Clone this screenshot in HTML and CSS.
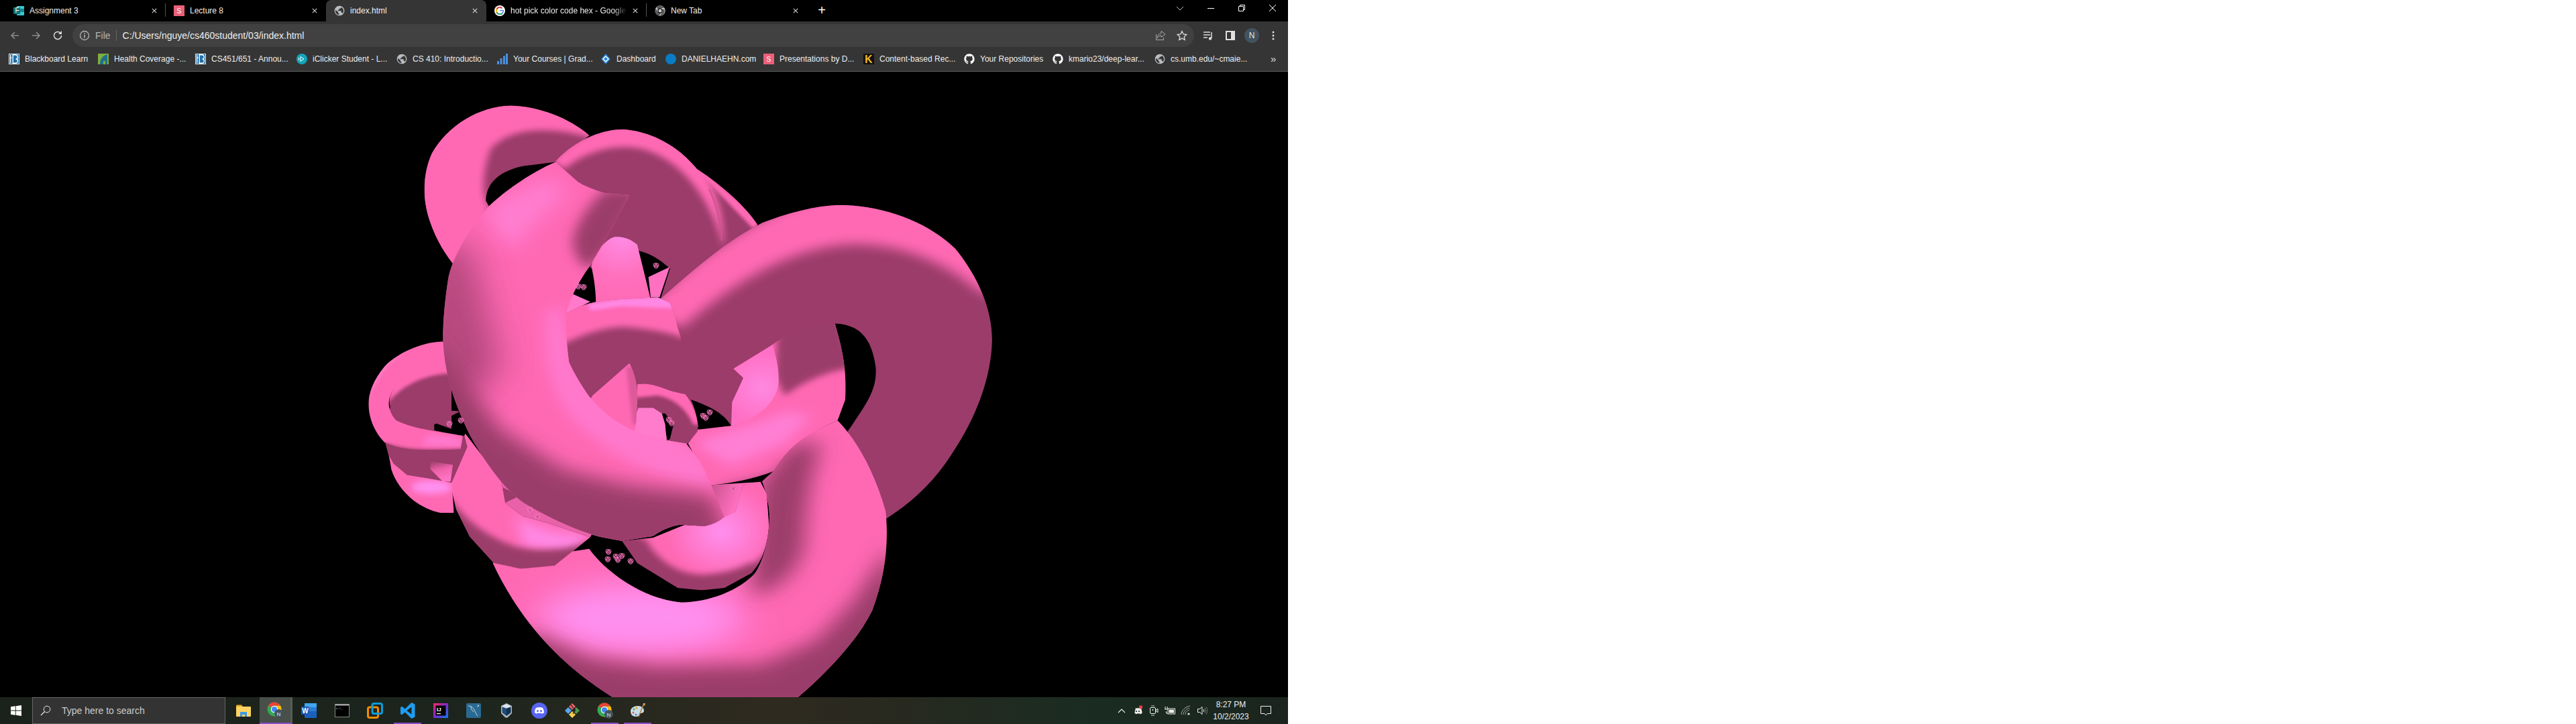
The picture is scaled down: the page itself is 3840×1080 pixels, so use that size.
FILE: index.html
```html
<!DOCTYPE html>
<html lang="en">
<head>
    <meta charset="UTF-8">
    <title>index.html</title>
    <link rel="stylesheet" href="styles.css">
</head>
<body>
    <svg class="defs" width="0" height="0">
        <defs>
            <filter id="b4" x="-30%" y="-30%" width="160%" height="160%"><feGaussianBlur stdDeviation="4"/></filter>
            <filter id="b8" x="-30%" y="-30%" width="160%" height="160%"><feGaussianBlur stdDeviation="8"/></filter>
            <filter id="b14" x="-30%" y="-30%" width="160%" height="160%"><feGaussianBlur stdDeviation="14"/></filter>
            <filter id="b24" x="-30%" y="-30%" width="160%" height="160%"><feGaussianBlur stdDeviation="24"/></filter>
            <filter id="b40" x="-40%" y="-40%" width="180%" height="180%"><feGaussianBlur stdDeviation="40"/></filter>

            <symbol id="globe" viewBox="0 0 24 24"><path fill="#b9bcc0" d="M12 1C5.9 1 1 5.9 1 12s4.9 11 11 11 11-4.9 11-11S18.1 1 12 1z"/><path fill="#353535" d="M3.2 10.2 9 15v1c0 1.1.9 2 2 2v3.2c-4.4-.5-8-4.4-8-9 0-.7.1-1.4.2-2zM19.4 18c-.3-.9-1.2-1.6-2.2-1.6h-1v-3c0-.6-.5-1-1-1H8.4v-2.2h2c.6 0 1-.5 1-1v-2h2.2c1.2 0 2.2-1 2.2-2.2v-.5C19.2 5.800 21 8.700 21 12c0 2.300-.6 4.400-1.600 6z"/></symbol>
            <symbol id="github" viewBox="0 0 24 24"><path fill="#fff" d="M12 .5C5.65.5.5 5.65.5 12c0 5.08 3.29 9.39 7.86 10.91.57.1.78-.25.78-.55v-2.13c-3.2.7-3.87-1.37-3.87-1.37-.52-1.33-1.28-1.68-1.28-1.68-1.04-.71.08-.7.08-.7 1.15.08 1.76 1.18 1.76 1.18 1.03 1.76 2.69 1.25 3.35.96.1-.74.4-1.25.73-1.54-2.55-.29-5.24-1.28-5.24-5.69 0-1.26.45-2.29 1.18-3.09-.12-.29-.51-1.46.11-3.05 0 0 .96-.31 3.15 1.18a11 11 0 0 1 5.74 0c2.19-1.49 3.15-1.18 3.15-1.18.62 1.59.23 2.76.11 3.05.73.8 1.18 1.83 1.18 3.09 0 4.42-2.69 5.39-5.25 5.68.41.36.78 1.05.78 2.12v3.14c0 .3.21.66.79.55C20.21 21.39 23.5 17.08 23.5 12 23.5 5.65 18.35.5 12 .5z"/></symbol>
            <symbol id="chrome" viewBox="0 0 48 48"><circle cx="24" cy="24" r="23" fill="#34a853"/><path fill="#ea4335" d="M4.100 12.500A23 23 0 0 1 43.900 12.500H24A11.500 11.500 0 0 0 14 18.200z"/><path fill="#fbbc04" d="M43.900 12.500A23 23 0 0 1 24 47L34 29.800A11.500 11.500 0 0 0 34 18.200 11.500 11.500 0 0 0 24 12.500z"/><circle cx="24" cy="24" r="11.500" fill="#fff"/><circle cx="24" cy="24" r="9" fill="#4285f4"/></symbol>
            <symbol id="close" viewBox="0 0 10 10"><path d="M1 1 9 9M9 1 1 9" stroke="#d8d8d8" stroke-width="1.300" fill="none"/></symbol>
            <symbol id="blackboard" viewBox="0 0 18 18"><rect width="18" height="18" fill="#f2f5f8"/><rect x="1" y="1" width="16" height="16" fill="#1f6fa8"/><path d="M3 2v14M3 7h2M7 2v14h4c3 0 4-2 4-4s-1-3-3-3c2 0 3-1 3-3s-1-4-4-4z" stroke="#fff" stroke-width="1.500" fill="none"/></symbol>
            <symbol id="tiny-knot" viewBox="-5 -5 10 10"><g fill="#9b3c6a" fill-opacity=".25" stroke="#ff7ac4" stroke-width=".9"><circle cx="-1.200" cy="-.8" r="2.800"/><circle cx="1.300" cy="-.5" r="2.800"/><circle cx="0" cy="1.400" r="2.800"/></g></symbol>
        </defs>
    </svg>

    <div class="screen">
        <!-- tab strip -->
        <div class="tabstrip">
            <div class="tab">
                <svg class="fav" viewBox="0 0 16 16"><rect x="5" y="1" width="11" height="14" rx="1" fill="#37c6d0"/><rect x="9" y="5" width="7" height="5" fill="#1a868c"/><rect x="0" y="3" width="10" height="10" rx="1" fill="#0d7377"/><text x="2.500" y="11" class="fav-letter">F</text></svg>
                <span class="tab-title">Assignment 3</span>
                <svg class="tab-close"><use href="#close"/></svg>
            </div>
            <div class="tab">
                <svg class="fav" viewBox="0 0 16 16"><rect width="16" height="16" fill="#ec5f7a"/><text x="4.500" y="12" class="fav-letter">S</text></svg>
                <span class="tab-title">Lecture 8</span>
                <svg class="tab-close"><use href="#close"/></svg>
            </div>
            <div class="tab tab-active">
                <svg class="fav"><use href="#globe"/></svg>
                <span class="tab-title">index.html</span>
                <svg class="tab-close"><use href="#close"/></svg>
            </div>
            <div class="tab">
                <svg class="fav" viewBox="0 0 48 48"><circle cx="24" cy="24" r="24" fill="#fff"/><path d="M38 25H24v-4h18c.8 8-4 21-18 21C13 42 6 33 6 24S13 6 24 6c5 0 9 2 12 5l-4 4c-2-2-5-4-8-4-7 0-12 6-12 13s5 13 12 13c7 0 12-4 14-12z" fill="#4285f4"/><path d="M8 14C11 9 17 6 24 6c5 0 9 2 12 5l-4 4c-2-2-5-4-8-4-5 0-9 3-11 7z" fill="#ea4335"/><path d="M6 24c0-3 1-7 2-10l5 4c-1 2-1 4-1 6s0 4 1 6l-5 4c-1-3-2-7-2-10z" fill="#fbbc05"/><path d="M8 34l5-4c2 4 6 7 11 7 3 0 6-1 8-2l5 4c-3 2-8 3-13 3-7 0-13-3-16-8z" fill="#34a853"/></svg>
                <span class="tab-title tab-title-fade">hot pick color code hex - Google</span>
                <svg class="tab-close"><use href="#close"/></svg>
            </div>
            <div class="tab">
                <svg class="fav" viewBox="0 0 48 48"><circle cx="24" cy="24" r="23" fill="#c9c9c9"/><path fill="#000" d="M24 12h19A23 23 0 0 0 41 9 23 23 0 0 0 8 8l8 12c1-4 4-8 8-8zM34 30 24 47c2 0 4-.5 6-1 8-3 14-11 14-20 0-3-.5-6-1-8H31c4 3 5 8 3 12zM14 30 5 14C3 17 1 20 1 24c0 11 8 21 19 23l10-16c-6 3-13 3-16-1z" opacity=".55"/><circle cx="24" cy="24" r="11" fill="#000"/><circle cx="24" cy="24" r="7.500" fill="#c9c9c9"/></svg>
                <span class="tab-title">New Tab</span>
                <svg class="tab-close"><use href="#close"/></svg>
            </div>
            <div class="new-tab">+</div>
            <div class="window-btns">
                <svg class="win-chevron" viewBox="0 0 12 7"><path d="M1 1l5 5 5-5" stroke="#bbb" fill="none"/></svg>
                <svg class="win-btn" viewBox="0 0 12 12"><path d="M1 6.500h10" stroke="#fff"/></svg>
                <svg class="win-btn" viewBox="0 0 12 12"><path d="M1.500 3.500h7v7h-7zM3.500 3.500v-2h7v7h-2" stroke="#fff" fill="none"/></svg>
                <svg class="win-btn" viewBox="0 0 12 12"><path d="M1 1l10 10M11 1 1 11" stroke="#fff" fill="none"/></svg>
            </div>
        </div>

        <!-- address bar -->
        <div class="toolbar">
            <svg class="nav-btn" viewBox="0 0 16 16"><path d="M14 8H3M8 3 3 8l5 5" stroke="#8b8b8b" stroke-width="1.600" fill="none"/></svg>
            <svg class="nav-btn" viewBox="0 0 16 16"><path d="M2 8h11M8 3l5 5-5 5" stroke="#8b8b8b" stroke-width="1.600" fill="none"/></svg>
            <svg class="nav-btn" viewBox="0 0 16 16"><path d="M13.500 8A5.500 5.500 0 1 1 11.900 4.100" stroke="#dcdcdc" stroke-width="1.600" fill="none"/><path d="M14 1v5H9z" fill="#dcdcdc"/></svg>
            <div class="omnibox">
                <svg class="info-icon" viewBox="0 0 16 16"><circle cx="8" cy="8" r="6.500" stroke="#b5b5b5" stroke-width="1.300" fill="none"/><path d="M8 7v4.500M8 4.300v1.400" stroke="#b5b5b5" stroke-width="1.500"/></svg>
                <span class="scheme">File</span>
                <span class="scheme-sep"></span>
                <span class="url">C:/Users/nguye/cs460student/03/index.html</span>
                <svg class="omni-icon omni-share" viewBox="0 0 16 16"><path d="M9 1.500 15 6l-6 4.500V8C6 8 4.500 9.500 3.500 12c0-4.500 2-7 5.500-7.500zM1.500 6v8.500h11V11" stroke="#a8a8a8" fill="none"/></svg>
                <svg class="omni-icon" viewBox="0 0 16 16"><path d="M8 1.500l2 4.500 4.800.5-3.600 3.200 1 4.800L8 12.100 3.800 14.500l1-4.800L1.200 6.500 6 6z" stroke="#dcdcdc" stroke-width="1.300" fill="none"/></svg>
            </div>
            <svg class="tool-icon" viewBox="0 0 16 16"><path d="M1 3h10M1 7h10M1 11h6" stroke="#dcdcdc" stroke-width="1.500"/><path d="M13 3v9" stroke="#dcdcdc" stroke-width="1.500"/><circle cx="11" cy="12.500" r="2.200" fill="#dcdcdc"/></svg>
            <svg class="tool-icon" viewBox="0 0 16 16"><path fill="#e0e0e0" d="M1 1h14v14H1z"/><path fill="#353535" d="M3 3h6v10H3z"/></svg>
            <div class="avatar">N</div>
            <svg class="tool-icon" viewBox="0 0 16 16"><circle cx="8" cy="3" r="1.500" fill="#dcdcdc"/><circle cx="8" cy="8" r="1.500" fill="#dcdcdc"/><circle cx="8" cy="13" r="1.500" fill="#dcdcdc"/></svg>
        </div>

        <!-- bookmarks -->
        <div class="bookmarks">
            <div class="bookmark"><svg class="fav"><use href="#blackboard"/></svg><span>Blackboard Learn</span></div>
            <div class="bookmark"><svg class="fav" viewBox="0 0 16 16"><rect width="16" height="16" fill="#7fae3c"/><path d="M3 16C3 8 7 3 14 1v15h-3v-5H8v5z" fill="#1f6f8b"/></svg><span>Health Coverage -...</span></div>
            <div class="bookmark"><svg class="fav"><use href="#blackboard"/></svg><span>CS451/651 - Annou...</span></div>
            <div class="bookmark"><svg class="fav" viewBox="0 0 16 16"><circle cx="8" cy="8" r="8" fill="#12a5bb"/><path d="M6 4.500 11 8l-5 3.500z" stroke="#fff" fill="none"/><path d="M3.500 6v4" stroke="#fff"/></svg><span>iClicker Student - L...</span></div>
            <div class="bookmark"><svg class="fav"><use href="#globe"/></svg><span>CS 410: Introductio...</span></div>
            <div class="bookmark"><svg class="fav" viewBox="0 0 16 16"><path fill="#4a90e2" d="M0 11h3v5H0zM4.500 7h3v9h-3zM9 3.500h3V16H9zM13 0h3v16h-3z"/></svg><span>Your Courses | Grad...</span></div>
            <div class="bookmark"><svg class="fav" viewBox="0 0 16 16"><path fill="#2e7fd6" d="M8 0l7 8-7 8-7-8z"/><path fill="none" stroke="#dff" stroke-width="1.600" d="M8 4l4 4-4 4-4-4z"/></svg><span>Dashboard</span></div>
            <div class="bookmark"><svg class="fav" viewBox="0 0 16 16"><circle cx="8" cy="8" r="8" fill="#0a7cc4"/></svg><span>DANIELHAEHN.com</span></div>
            <div class="bookmark"><svg class="fav" viewBox="0 0 16 16"><rect width="16" height="16" fill="#ec5f7a"/><text x="4.500" y="12" class="fav-letter">S</text></svg><span>Presentations by D...</span></div>
            <div class="bookmark"><svg class="fav" viewBox="0 0 16 16"><rect width="16" height="16" fill="#111"/><text x="2" y="14" class="fav-k">K</text></svg><span>Content-based Rec...</span></div>
            <div class="bookmark"><svg class="fav"><use href="#github"/></svg><span>Your Repositories</span></div>
            <div class="bookmark"><svg class="fav"><use href="#github"/></svg><span>kmario23/deep-lear...</span></div>
            <div class="bookmark"><svg class="fav"><use href="#globe"/></svg><span>cs.umb.edu/~cmaie...</span></div>
            <div class="more-marks">&raquo;</div>
        </div>

        <!-- the page: a knot drawn with shaded tube pieces, back to front -->
        <div class="page">
            <svg class="knot" viewBox="0 107 1920 933">
                <defs>
                    <clipPath id="c-topring"><path d="M565 155C520 110 450 82 390 80C320 82 250 130 215 200C195 250 192 310 210 370C225 420 245 455 270 490L350 350L335 320C335 280 360 245 420 232L490 222Z"/></clipPath>
                    <clipPath id="c-arc"><path d="M490 220C540 160 600 140 640 140C710 145 770 190 805 240C860 280 910 330 940 380L860 470L800 520L720 580L745 490C720 465 700 452 675 445C640 430 600 440 570 490L500 400Z"/></clipPath>
                    <clipPath id="c-big"><path d="M720 570C800 490 870 420 950 375C1020 345 1080 330 1130 330C1230 335 1320 375 1380 440C1430 510 1462 590 1462 670C1460 760 1430 860 1370 960C1330 1030 1280 1080 1225 1120L1140 900C1190 820 1205 790 1203 740C1195 670 1170 630 1110 628C1080 628 1050 632 1020 645L968 685L886 742L908 765L883 826L881 885L800 890L560 820L510 650L640 570Z"/></clipPath>
                    <clipPath id="c-right"><path d="M870 730L968 660L1030 610L1105 600L1112 628C1125 680 1140 740 1135 820L1118 872C1060 900 1020 930 995 970L975 1000C930 1020 880 1030 835 1035L785 930L808 893L881 885Z"/></clipPath>
                    <clipPath id="c-inner"><path d="M870 730L968 665C985 720 990 760 985 790C975 830 940 870 881 885L883 826L908 765Z"/></clipPath>
                    <clipPath id="c-bottom"><path d="M1118 872C1160 920 1200 1000 1225 1100C1232 1180 1225 1260 1195 1350C1160 1430 1090 1510 1030 1568L617 1568C523 1501 420 1400 350 1230L565 1195C600 1250 680 1320 770 1330C830 1330 900 1300 935 1255C960 1210 970 1140 965 1090C960 1060 955 1040 950 1025L975 1000C1010 930 1060 900 1118 872Z"/></clipPath>
                    <clipPath id="c-blob"><path d="M638 1175L707 1167L777 1135L822 1138L891 1101L906 1034L946 1026L960 1057L965 1135C962 1190 948 1230 926 1256L866 1293L816 1299L762 1293L672 1231Z"/></clipPath>
                    <clipPath id="c-main"><path d="M490 222C450 240 380 290 340 335C300 390 265 450 252 510C243 570 238 640 240 680C245 760 265 830 300 910C330 970 370 1040 420 1080C480 1120 540 1150 590 1165L638 1175L707 1163C730 1145 755 1134 776 1134L821 1138C840 1135 855 1125 866 1115L837 1034L821 995L811 975L781 930L736 922C700 915 680 905 657 894C620 875 590 845 565 812C545 780 530 750 520 725C515 680 512 640 513 607C520 570 540 525 565 486C590 440 610 400 655 305L600 300C570 290 550 280 540 272Z"/></clipPath>
                    <clipPath id="c-low"><path d="M289 905L259 1006L257 1040L269 1096L299 1164L353 1231L413 1245L488 1237L567 1166L473 1130L418 1113L378 1079L369 1023Z"/></clipPath>
                    <clipPath id="c-band"><path d="M130 385C190 345 260 325 380 318L540 310L595 335L615 375L630 445L645 490L650 700L300 860L60 700L60 420Z"/></clipPath>
                    <clipPath id="c-small"><path d="M450 700C500 690 550 710 600 730L665 745C700 790 725 850 720 910L675 965L585 1010L450 960Z"/></clipPath>
                    <clipPath id="c-up"><path d="M250 150C270 100 310 50 350 40C390 38 420 50 450 75L510 320L265 340C265 260 250 200 245 170Z"/></clipPath>
                    <clipPath id="c-stub"><path d="M250 750L415 605C440 650 455 720 450 780L445 870L430 960L220 800Z"/></clipPath>
                    <clipPath id="c-core"><path d="M420 900L455 805L520 805L560 830L575 880L585 1010L420 980Z"/></clipPath>
                    <clipPath id="c-loop"><path d="M370 28C280 28 170 70 100 140C50 200 28 260 28 310C30 380 60 440 100 480C170 510 240 520 440 510L450 450C350 430 240 425 150 380C125 350 115 320 120 290C125 260 140 240 160 210C210 150 280 95 370 75Z"/></clipPath>
                    <clipPath id="c-loop2"><path d="M370 75C280 85 200 140 150 220C125 260 115 290 125 320L400 420L400 75Z"/></clipPath>
                    <clipPath id="c-loop3"><path d="M120 540L130 600C145 650 180 700 230 740C270 770 320 790 350 795L410 795L400 660L370 655L290 640L200 625L140 575Z"/></clipPath>
                    <radialGradient id="g-up" cx=".5" cy="0" r="1"><stop offset="0" stop-color="#ff8ce8"/><stop offset=".6" stop-color="#ff70bc"/><stop offset="1" stop-color="#ff69b4"/></radialGradient>
                    <radialGradient id="g-inner" gradientUnits="userSpaceOnUse" cx="950" cy="790" r="90"><stop offset="0" stop-color="#ff88e0"/><stop offset="1" stop-color="#ff70c4"/></radialGradient>
                    <radialGradient id="g-blob" gradientUnits="userSpaceOnUse" cx="860" cy="1150" r="120"><stop offset="0" stop-color="#ff90f0"/><stop offset="1" stop-color="#ff69b4"/></radialGradient>
                    <linearGradient id="g-patch" x1="0" y1="0" x2=".3" y2="1"><stop offset="0" stop-color="#9b3c6a"/><stop offset=".5" stop-color="#ef62aa"/><stop offset="1" stop-color="#ff74c4"/></linearGradient>
                    <linearGradient id="g-sliver" x1="0" y1="0" x2="1" y2=".3"><stop offset="0" stop-color="#c9528f"/><stop offset=".6" stop-color="#ff6fbe"/><stop offset="1" stop-color="#ff80d8"/></linearGradient>
                </defs>

                <g transform="translate(500 110) scale(.6696 .5931)">
                    <!-- top left loop -->
                    <g clip-path="url(#c-topring)">
                        <rect x="100" y="0" width="600" height="600" class="k-dark"/>
                        <path class="k-pink" filter="url(#b8)" d="M390 50C300 50 170 150 170 280C170 380 230 470 280 510L345 340C320 300 330 240 345 190C380 140 470 125 580 165L580 90Z"/>
                    </g>
                    <!-- arc behind the main tube -->
                    <g clip-path="url(#c-arc)">
                        <rect x="450" y="100" width="520" height="500" class="k-dark"/>
                        <path class="k-pink" filter="url(#b8)" d="M480 220C540 150 600 130 640 125C720 130 790 185 820 240C850 300 865 360 865 440L848 380C820 300 770 225 700 195C640 170 560 190 510 240Z"/>
                        <path class="k-pink" filter="url(#b4)" d="M800 225L950 370L930 390L815 255Z"/>
                        <path d="M832 290C848 330 858 370 860 420" stroke="#c9558f" stroke-width="3" fill="none"/>
                    </g>
                    <!-- inner right tube, under the big one -->
                    <g clip-path="url(#c-right)">
                        <rect x="760" y="590" width="400" height="460" class="k-pink"/>
                        <path class="k-dark" filter="url(#b8)" d="M985 590L1120 590L1150 740C1100 745 1040 775 1000 810L980 760Z"/>
                        <path class="k-dark" filter="url(#b14)" d="M830 1050L975 1010L1005 960L1000 1060Z"/>
                        <path fill="#ff7fd4" filter="url(#b14)" d="M800 930C880 890 950 880 1000 850L1060 860L1000 930L880 985Z"/>
                    </g>
                    <g clip-path="url(#c-inner)">
                        <rect x="860" y="650" width="140" height="250" fill="url(#g-inner)"/>
                    </g>
                    <!-- big right tube -->
                    <g clip-path="url(#c-big)">
                        <rect x="500" y="300" width="1000" height="900" class="k-dark"/>
                        <path class="k-pink" filter="url(#b14)" d="M690 590C800 470 950 330 1130 300C1300 300 1430 420 1490 570L1430 545C1360 475 1250 420 1130 430C1000 445 880 530 770 640Z"/>
                    </g>
                    <!-- bottom tube -->
                    <g clip-path="url(#c-bottom)">
                        <rect x="300" y="850" width="1000" height="750" class="k-pink"/>
                        <ellipse cx="680" cy="1370" rx="230" ry="90" class="k-hi" filter="url(#b40)"/>
                        <path class="k-dark" filter="url(#b24)" d="M945 1030L1010 935L1085 925C1060 1000 1045 1100 1045 1180C1035 1260 970 1310 925 1310Z"/>
                        <path class="k-dark" filter="url(#b24)" d="M430 1400L572 1470L722 1490L946 1485L1070 1425L1150 1330L1235 1190L1300 1620L380 1620Z"/>
                    </g>
                    <!-- sliver next to the end of the main tube -->
                    <path d="M837 1034L945 1027L951 1107L866 1124Z" fill="url(#g-sliver)"/>
                    <!-- lower blob -->
                    <g clip-path="url(#c-blob)">
                        <rect x="620" y="1020" width="360" height="300" class="k-dark"/>
                        <path fill="url(#g-blob)" filter="url(#b8)" d="M640 1150L960 1000L990 1130C970 1200 940 1235 921 1231C890 1250 860 1256 820 1260C770 1260 720 1230 690 1170Z"/>
                    </g>
                    <!-- lower left inner tube -->
                    <path d="M369 1023L378 1079L418 1113L473 1130L567 1166L600 1100L430 1040Z" fill="#e962a9"/>
                    <path d="M378 1079L410 1062L372 1040Z" class="k-dark"/>
                    <g clip-path="url(#c-low)">
                        <rect x="240" y="880" width="340" height="380" class="k-pink"/>
                        <path fill="#ff88e4" filter="url(#b14)" d="M400 1110C440 1140 520 1170 560 1150L540 1210L420 1190Z"/>
                        <path class="k-dark" filter="url(#b8)" d="M250 1060C280 1110 320 1150 370 1175C430 1210 520 1200 580 1170L500 1280L300 1280L240 1100Z"/>
                    </g>
                </g>

                <!-- left loops, drawn over the crop at (540,500) -->
                <g transform="translate(540 500) scale(.3333)">
                    <path class="k-dark" d="M100 470L125 565L200 625L290 640L360 655L400 660L470 500L430 340L125 320Z"/>
                    <path d="M305 565L405 580L395 655L360 655L305 600Z" fill="url(#g-patch)"/>
                    <g clip-path="url(#c-loop3)">
                        <rect x="100" y="520" width="330" height="300" class="k-pink"/>
                        <ellipse cx="310" cy="680" rx="90" ry="30" class="k-hi" filter="url(#b14)"/>
                    </g>
                    <path d="M322 400L430 345L465 430L450 455L322 425Z" fill="#000"/>
                    <g clip-path="url(#c-loop2)">
                        <rect x="100" y="60" width="320" height="360" class="k-dark"/>
                        <path class="k-pink" filter="url(#b8)" d="M370 60C280 70 190 140 135 220L110 310C170 230 270 175 400 170L400 60Z"/>
                    </g>
                    <g clip-path="url(#c-loop)">
                        <rect x="0" y="0" width="480" height="540" class="k-pink"/>
                        <path class="k-hi" filter="url(#b14)" opacity=".45" d="M300 445C350 450 420 460 450 470L440 500L260 490Z"/>
                        <path d="M90 490C170 525 260 530 450 520" stroke="#9b3c6a" stroke-width="26" fill="none" filter="url(#b8)"/>
                        <path d="M0 320C30 230 90 120 200 50" stroke="#fb7fc8" stroke-width="20" fill="none" filter="url(#b8)"/>
                    </g>
                </g>

                <!-- centre pieces, drawn over the crop at (800,340) -->
                <g transform="translate(800 340) scale(.3333)">
                    <path d="M500 220L595 175L550 310L510 310Z" fill="#ff70c0"/>
                    <path d="M130 385L135 335L150 290C170 300 205 315 240 330Z" fill="#ff7acb"/>
                    <g clip-path="url(#c-up)">
                        <rect x="230" y="30" width="300" height="320" fill="url(#g-up)"/>
                    </g>
                    <g clip-path="url(#c-band)">
                        <rect x="50" y="300" width="610" height="570" class="k-dark"/>
                        <path class="k-pink" filter="url(#b14)" d="M50 560C200 465 340 435 420 445C500 455 590 465 660 495L640 290L50 290Z"/>
                        <path class="k-hi" filter="url(#b8)" opacity=".8" d="M230 340L380 318L600 305L610 360L380 350L240 370Z"/>
                    </g>
                    <path d="M690 768C760 795 830 820 870 885L725 902C720 860 710 810 690 768Z" fill="#000"/>
                    <g clip-path="url(#c-small)">
                        <rect x="440" y="680" width="300" height="340" class="k-dark"/>
                        <path class="k-pink" filter="url(#b8)" d="M440 680L680 720L740 880L700 880C670 810 610 760 540 750L440 760Z"/>
                    </g>
                    <path d="M575 830L612 880L596 945L585 950L560 830Z" fill="#000"/>
                    <g clip-path="url(#c-core)">
                        <rect x="400" y="790" width="200" height="230" fill="#ff7ccc"/>
                    </g>
                    <g clip-path="url(#c-stub)">
                        <rect x="210" y="590" width="260" height="380" class="k-pink"/>
                        <path class="k-dark" filter="url(#b8)" opacity=".35" d="M400 620L460 620L460 880L430 880Z"/>
                    </g>
                </g>

                <g transform="translate(500 110) scale(.6696 .5931)">
                    <!-- main front tube -->
                    <g clip-path="url(#c-main)">
                        <rect x="200" y="200" width="700" height="1000" class="k-pink"/>
                        <path fill="#ff78cc" filter="url(#b14)" d="M500 580L530 725C560 800 620 860 736 900L830 970L840 1040C720 1020 600 960 520 860C470 780 460 680 470 600Z"/>
                        <path fill="#ff7ed0" filter="url(#b24)" d="M340 330L480 260L520 300C470 340 430 390 400 440C360 420 340 380 340 330Z"/>
                        <path class="k-dark" filter="url(#b40)" opacity=".75" d="M190 430L300 430L330 560L370 740L300 820L190 820Z"/>
                        <path class="k-dark" filter="url(#b24)" d="M190 640L249 714L368 893L508 995L652 1035L840 1060L900 1250L500 1250L150 1000Z"/>
                        <path class="k-dark" filter="url(#b14)" d="M600 290L680 290L620 430L565 490C530 470 520 420 537 388C550 350 575 320 600 290Z"/>
                    </g>
                </g>

                <!-- tiny copies of the knot, seen far away -->
                <g>
                    <use href="#tiny-knot" x="973" y="391" width="10" height="10"/>
                    <use href="#tiny-knot" x="857" y="422" width="10" height="10"/>
                    <use href="#tiny-knot" x="865" y="423" width="10" height="10"/>
                    <use href="#tiny-knot" x="1043" y="615" width="10" height="10"/>
                    <use href="#tiny-knot" x="1047" y="618" width="10" height="10"/>
                    <use href="#tiny-knot" x="1053" y="610" width="10" height="10"/>
                    <use href="#tiny-knot" x="992" y="621" width="10" height="10"/>
                    <use href="#tiny-knot" x="996" y="626" width="10" height="10"/>
                    <use href="#tiny-knot" x="665" y="627" width="10" height="10"/>
                    <use href="#tiny-knot" x="682" y="622" width="10" height="10"/>
                    <use href="#tiny-knot" x="785" y="755" width="10" height="10"/>
                    <use href="#tiny-knot" x="796" y="765" width="10" height="10"/>
                    <use href="#tiny-knot" x="1088" y="723" width="10" height="10"/>
                    <use href="#tiny-knot" x="902" y="818" width="10" height="10"/>
                    <use href="#tiny-knot" x="901" y="829" width="10" height="10"/>
                    <use href="#tiny-knot" x="913" y="825" width="10" height="10"/>
                    <use href="#tiny-knot" x="922" y="824" width="10" height="10"/>
                    <use href="#tiny-knot" x="916" y="830" width="10" height="10"/>
                    <use href="#tiny-knot" x="935" y="832" width="10" height="10"/>
                </g>
            </svg>
        </div>

        <!-- windows taskbar -->
        <div class="taskbar">
            <div class="start">
                <svg viewBox="0 0 16 16" width="16" height="16"><path fill="#fff" d="M0 2.300 6.800 1.300v6.300H0zM7.700 1.200 16 0v7.600H7.700zM0 8.500h6.800v6.300L0 13.800zM7.700 8.500H16V16l-8.300-1.200z"/></svg>
            </div>
            <div class="search">
                <svg viewBox="0 0 16 16" width="16" height="16"><circle cx="10" cy="6" r="4.800" stroke="#e8e8e8" fill="none"/><path d="M6.500 9.500 1 15" stroke="#e8e8e8" stroke-width="1.200"/></svg>
                <span>Type here to search</span>
            </div>
            <div class="task-icons">
                <div class="task">
                    <svg viewBox="0 0 24 24"><path fill="#e8a92e" d="M1 5c0-1 .5-1.500 1.500-1.500H9l2 2.500h-10z"/><path fill="#fcd462" d="M1 6h21c.6 0 1 .4 1 1v13c0 .6-.4 1-1 1H2c-.6 0-1-.4-1-1z"/><path fill="#3d9ae8" d="M7 14h10v7h-3v-3h-4v3H7z"/></svg>
                </div>
                <div class="task task-active">
                    <svg viewBox="0 0 24 24"><use href="#chrome" width="22" height="22"/><circle cx="17.500" cy="17.500" r="6.500" fill="#42535f"/><text x="17.500" y="20.500" class="badge-letter">N</text></svg>
                </div>
                <div class="task">
                    <svg viewBox="0 0 24 24"><rect x="5" y="1" width="18" height="22" rx="1.500" fill="#1c5fbd"/><rect x="5" y="1" width="18" height="6" fill="#41a5ee"/><rect x="5" y="7" width="18" height="6" fill="#2b7cd3"/><rect x="0" y="6" width="12" height="12" rx="1" fill="#185abd"/><text x="6" y="15.500" class="word-letter">W</text></svg>
                </div>
                <div class="task">
                    <svg viewBox="0 0 24 24"><rect x="1" y="2" width="22" height="20" fill="#888"/><rect x="2" y="3" width="20" height="1.500" fill="#bbb"/><rect x="2" y="4.500" width="20" height="16.500" fill="#000"/><text x="3" y="9.500" class="term-text">C:\_</text></svg>
                </div>
                <div class="task">
                    <svg viewBox="0 0 24 24"><rect x="1.500" y="7" width="15" height="15.500" rx="2.500" fill="none" stroke="#f38b00" stroke-width="3"/><rect x="8" y="1.500" width="14.500" height="15" rx="2.500" fill="none" stroke="#0d9ad8" stroke-width="3"/></svg>
                </div>
                <div class="task task-open">
                    <svg viewBox="0 0 24 24"><path fill="#1f9cf0" fill-rule="evenodd" d="M17.500 0 7.800 9.500 3 5.800 1 7v10l2 1.200 4.800-3.700L17.500 24l5-2.400V2.400zM17.500 6.500v11L10.300 12z"/></svg>
                </div>
                <div class="task">
                    <svg viewBox="0 0 24 24"><defs><linearGradient id="g-ij" x1="0" y1="0" x2="1" y2="1"><stop offset="0" stop-color="#fe2857"/><stop offset=".5" stop-color="#7b2bd0"/><stop offset="1" stop-color="#087cfa"/></linearGradient></defs><rect x="1" y="1" width="22" height="22" fill="url(#g-ij)"/><rect x="4.500" y="4.500" width="15" height="15" fill="#000"/><text x="6" y="13" class="ij-letter">IJ</text><rect x="6" y="16" width="6" height="1.200" fill="#fff"/></svg>
                </div>
                <div class="task">
                    <svg viewBox="0 0 24 24"><rect x="1" y="1" width="22" height="22" rx="2" fill="#2a6a92"/><path d="M4 5c4 0 7 2 9 6 1 2 2 5 5 9M8 6c0 4 2 6 4 8M18 3l2 2-3 1" stroke="#d8e8f2" stroke-width=".9" fill="none"/></svg>
                </div>
                <div class="task">
                    <svg viewBox="0 0 24 24"><path fill="#aeb9c2" d="M12 1 20 5v11l-6.500 6.500h-3L4 16V5z"/><path fill="#12304f" d="M12 9 18.500 6.500v8.500L12 20z"/><path fill="#1f4c78" d="M12 9 5.500 6.500v8.500L12 20z"/><path fill="#dfe6ec" d="M5 5.500 12 2.500 19 5.500 12 8z"/></svg>
                </div>
                <div class="task">
                    <svg viewBox="0 0 24 24"><circle cx="12" cy="12" r="12" fill="#5865f2"/><path fill="#fff" d="M7 8c3-1.200 7-1.200 10 0 1.300 2 2 4.500 2 7-1.200 1-2.500 1.500-3.500 1.800l-.8-1.300c-1.800.5-3.600.5-5.400 0l-.8 1.300C8.500 16.500 6.200 16 5 15c0-2.500.7-5 2-7z"/><circle cx="9.500" cy="12.500" r="1.500" fill="#5865f2"/><circle cx="14.500" cy="12.500" r="1.500" fill="#5865f2"/></svg>
                </div>
                <div class="task">
                    <svg viewBox="0 0 24 24"><path fill="#e8656a" d="M12 1 17 6 12 11 7 6z"/><path fill="#4c9a4c" d="M18 7l5 5-5 5-5-5z"/><path fill="#f4d24e" d="M12 13l5 5-5 5-5-5z"/><path fill="#5aa7f0" d="M6 7l5 5-5 5-5-5z"/><circle cx="15" cy="11" r="2" fill="#222"/><path d="M10 3l6 9-3 5" stroke="#222" stroke-width="1.300" fill="none"/></svg>
                </div>
                <div class="task task-open">
                    <svg viewBox="0 0 24 24"><use href="#chrome" width="22" height="22"/><circle cx="17.500" cy="17.500" r="6.500" fill="#42535f"/><text x="17.500" y="20.500" class="badge-letter">N</text></svg>
                </div>
                <div class="task task-open">
                    <svg viewBox="0 0 24 24"><path fill="#c7dde8" d="M1 13C1 8 6 5 12 5c5 0 9 3 9 7 0 3-3 4-5 4-1 0-2 1-2 2 0 2-2 3-5 3-5 0-8-3-8-8z"/><circle cx="6" cy="10" r="1.500" fill="#5aa34f"/><circle cx="10" cy="8" r="1.500" fill="#e0a33a"/><circle cx="5" cy="15" r="1.500" fill="#d85a5a"/><circle cx="9" cy="18" r="1.500" fill="#4f81c7"/><path d="M21 1 13 21" stroke="#b5814a" stroke-width="1.600"/><path d="M20 1h3l-1 4-2-1z" fill="#d2a26b"/></svg>
                </div>
            </div>
            <div class="tray">
                <svg class="tray-icon" viewBox="0 0 16 16"><path d="M3 11l5-5 5 5" stroke="#eee" stroke-width="1.100" fill="none"/></svg>
                <svg class="tray-icon" viewBox="0 0 16 16"><path fill="#eee" d="M3 5c3-1 7-1 10 0 1 2 1.500 4 1.500 7-1 .8-2 1-3 1.300l-.7-1c-1.200.3-2.400.3-3.600 0l-.7 1c-1-.3-2-.5-3-1.300 0-3 .5-5 1.500-7z"/><circle cx="6" cy="9" r="1.100" fill="#1d261f"/><circle cx="10" cy="9" r="1.100" fill="#1d261f"/><circle cx="12.500" cy="2.800" r="2.600" fill="#f23f42"/></svg>
                <svg class="tray-icon" viewBox="0 0 16 16"><path d="M4 1h5M4 15h5" stroke="#ccc"/><rect x="2.500" y="3.500" width="8" height="9" rx="1.500" stroke="#eee" fill="none"/><path d="M11 7l3-1.500v5L11 9z" stroke="#eee" fill="none"/><circle cx="6.500" cy="7" r="1" fill="#eee"/></svg>
                <svg class="tray-icon" viewBox="0 0 16 16"><path d="M1 2v4M4 2v4M0 6h5M2.500 9v3h2" stroke="#eee" fill="none"/><rect x="5" y="5" width="10.500" height="8" fill="none" stroke="#eee"/><rect x="6.500" y="6.500" width="7.500" height="5" fill="#eee"/></svg>
                <svg class="tray-icon" viewBox="0 0 16 16"><path d="M1 14C1 8 7 2 14 1M4 14c0-4 4-9 9-10M7 14c0-3 2-6 6-7" stroke="#aaa" fill="none"/><circle cx="12" cy="13" r="1.600" fill="#eee"/></svg>
                <svg class="tray-icon" viewBox="0 0 16 16"><path d="M1.500 5.500h3L8 2.500v11l-3.500-3h-3z" stroke="#eee" fill="none"/><path d="M10 6c1 1.300 1 2.700 0 4" stroke="#eee" fill="none"/><path d="M12 4c1.600 2.500 1.600 5.500 0 8M14 2.500c2.300 3.500 2.300 7.500 0 11" stroke="#777" fill="none"/></svg>
                <div class="clock"><span>8:27 PM</span><span>10/2/2023</span></div>
                <div class="notify">
                    <svg viewBox="0 0 16 16" width="16" height="16"><path d="M.5 1.500h15v11h-5.500L8 15l-2-2.500H.5z" stroke="#eee" fill="none"/></svg>
                </div>
            </div>
        </div>
    </div>
</body>
</html>
```

FILE: styles.css
```css
html, body {
    margin: 0;
    background: #fff;
}

body {
    width: 3840px;
    height: 1080px;
    overflow: hidden;
    font-family: "Liberation Sans", Arial, sans-serif;
}

.defs {
    position: absolute;
}

.screen {
    width: 1920px;
    height: 1080px;
    display: flex;
    flex-direction: column;
    background: #000;
}

/* tabs */
.tabstrip {
    height: 32px;
    flex: none;
    display: flex;
    padding-left: 8px;
    background: #000;
}

.tab {
    width: 239px;
    height: 32px;
    box-sizing: border-box;
    flex: none;
    display: flex;
    align-items: center;
    gap: 8px;
    padding: 0 12px;
    color: #eee;
    font-size: 12px;
    position: relative;
}

.tab + .tab::before {
    content: "";
    position: absolute;
    left: -1px;
    top: 5px;
    height: 20px;
    width: 1px;
    background: #555;
}

.tab-active {
    background: #353535;
    border-radius: 8px 8px 0 0;
}

.tab-active::before,
.tab-active + .tab::before {
    display: none;
}

.tab-title {
    flex: 1;
    white-space: nowrap;
    overflow: hidden;
}

.tab-title-fade {
    -webkit-mask-image: linear-gradient(to right, #000 88%, transparent);
    mask-image: linear-gradient(to right, #000 88%, transparent);
}

.tab-close {
    width: 8px;
    height: 8px;
    flex: none;
    margin-right: 1px;
}

.fav {
    width: 16px;
    height: 16px;
    flex: none;
}

.fav-letter {
    font-size: 10px;
    fill: #fff;
    font-family: "Liberation Sans", sans-serif;
}

.fav-k {
    font-size: 16px;
    font-weight: bold;
    fill: #f6b81c;
    font-family: "Liberation Sans", sans-serif;
}

.new-tab {
    width: 44px;
    text-align: center;
    color: #fff;
    font-size: 20px;
    line-height: 30px;
}

.window-btns {
    margin-left: auto;
    display: flex;
    align-items: center;
    height: 24px;
}

.win-chevron {
    width: 12px;
    height: 7px;
    margin-right: 34px;
}

.win-btn {
    width: 12px;
    height: 12px;
    margin-right: 34px;
}

.win-btn:last-child {
    margin-right: 17px;
}

/* address bar */
.toolbar {
    height: 38px;
    flex: none;
    box-sizing: border-box;
    padding: 4px 0 0 14px;
    display: flex;
    align-items: center;
    background: #353535;
}

.nav-btn {
    width: 16px;
    height: 16px;
    flex: none;
    margin-right: 16px;
}

.omnibox {
    margin-left: -2px;
    width: 1672px;
    height: 34px;
    box-sizing: border-box;
    padding: 0 10px 0 10px;
    flex: none;
    display: flex;
    align-items: center;
    border-radius: 17px;
    background: #414141;
}

.info-icon {
    width: 16px;
    height: 16px;
    flex: none;
}

.scheme {
    margin-left: 8px;
    color: #b5b5b5;
    font-size: 14px;
}

.scheme-sep {
    width: 1px;
    height: 16px;
    margin: 0 9px 0 8px;
    background: #666;
}

.url {
    color: #eee;
    font-size: 14px;
}

.omni-icon {
    width: 16px;
    height: 16px;
    flex: none;
}

.omni-share {
    margin-left: auto;
    margin-right: 16px;
}

.tool-icon {
    width: 16px;
    height: 16px;
    flex: none;
    margin-left: 17px;
}

.omnibox + .tool-icon,
.avatar + .tool-icon {
    margin-left: 13px;
}

.avatar {
    width: 22px;
    height: 22px;
    margin-left: 13px;
    flex: none;
    border-radius: 50%;
    background: #42535f;
    color: #dfe8ee;
    font-size: 12px;
    line-height: 22px;
    text-align: center;
}

/* bookmarks */
.bookmarks {
    height: 37px;
    flex: none;
    box-sizing: border-box;
    padding: 0 0 1px 13px;
    display: flex;
    align-items: center;
    background: #353535;
    border-bottom: 1px solid #5c5c5c;
}

.bookmark {
    flex: none;
    display: flex;
    align-items: center;
    gap: 8px;
    color: #eee;
    font-size: 12px;
    white-space: nowrap;
}

.bookmark:nth-child(1) { width: 133px; }
.bookmark:nth-child(2) { width: 145px; }
.bookmark:nth-child(3) { width: 151px; }
.bookmark:nth-child(4) { width: 149px; }
.bookmark:nth-child(5) { width: 150px; }
.bookmark:nth-child(6) { width: 154px; }
.bookmark:nth-child(7) { width: 97px; }
.bookmark:nth-child(8) { width: 146px; }
.bookmark:nth-child(9) { width: 149px; }
.bookmark:nth-child(10) { width: 150px; }
.bookmark:nth-child(11) { width: 132px; }
.bookmark:nth-child(12) { width: 152px; }
.bookmark:nth-child(13) { width: 173px; }

.more-marks {
    color: #ddd;
    font-size: 15px;
}

/* page with the knot */
.page {
    flex: 1;
    min-height: 0;
    background: #000;
}

.knot {
    display: block;
    width: 1920px;
    height: 933px;
}

.k-dark { fill: #9b3c6a; }
.k-pink { fill: #ff69b4; }
.k-hi { fill: #ff90f0; }

/* taskbar */
.taskbar {
    height: 40px;
    flex: none;
    display: flex;
    background: linear-gradient(to right, #1b221b 0%, #1c251d 35%, #2f2a20 60%, #27291f 70%, #1a2c22 85%, #1b241e 100%);
}

.start {
    width: 48px;
    flex: none;
    display: flex;
    align-items: center;
    justify-content: center;
}

.search {
    width: 288px;
    flex: none;
    box-sizing: border-box;
    display: flex;
    align-items: center;
    gap: 16px;
    padding-left: 11px;
    background: #333;
    border: 1px solid #666;
    color: #ccc;
    font-size: 14px;
}

.task-icons {
    display: flex;
    margin-left: 2px;
}

.task {
    width: 49px;
    height: 40px;
    box-sizing: border-box;
    flex: none;
    display: flex;
    align-items: center;
    justify-content: center;
    position: relative;
}

.task svg {
    width: 24px;
    height: 24px;
}

.task-active {
    background: rgba(255, 255, 255, 0.2);
    border-right: 3px solid rgba(255, 255, 255, 0.08);
    border-bottom: 2px solid #8a4fc8;
}

.task-open::after {
    content: "";
    position: absolute;
    left: 4px;
    right: 4px;
    bottom: 0;
    height: 2px;
    background: #8a4fc8;
}

.badge-letter {
    font-size: 8px;
    fill: #dfe8ee;
    text-anchor: middle;
}

.word-letter {
    font-size: 10px;
    font-weight: bold;
    fill: #fff;
    text-anchor: middle;
}

.term-text {
    font-size: 4px;
    fill: #ddd;
    font-family: "Liberation Mono", monospace;
}

.ij-letter {
    font-size: 8px;
    font-weight: bold;
    fill: #fff;
}

.tray {
    margin-left: auto;
    display: flex;
    align-items: center;
    padding-right: 12px;
}

.tray-icon {
    width: 16px;
    height: 16px;
    flex: none;
    padding: 0 4px;
}

.clock {
    width: 62px;
    display: flex;
    flex-direction: column;
    align-items: center;
    gap: 4px;
    color: #eee;
    font-size: 12px;
}

.notify {
    width: 42px;
    display: flex;
    justify-content: center;
}
```
